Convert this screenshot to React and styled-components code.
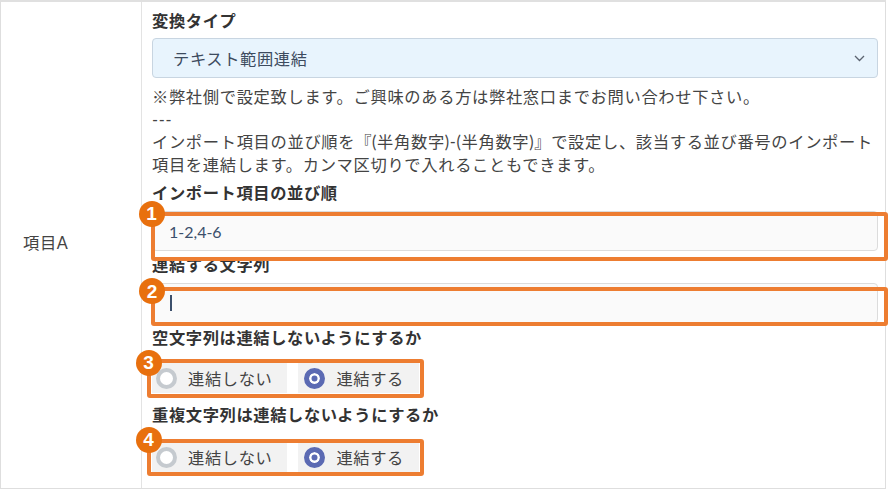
import React from "react";
import styled, { createGlobalStyle } from "styled-components";

const Global = createGlobalStyle`
  html, body { margin: 0; padding: 0; background: #fff; }
  body { overflow: hidden; font-family: Lato, "Noto Sans CJK JP", sans-serif; }
  * { box-sizing: border-box; }
`;

const Table = styled.div`
  width: 886px;
  height: 489px;
  display: grid;
  grid-template-columns: 141px 1fr;
  border: 1px solid #dedede;
  border-top: 2px solid #e0e0e0;
`;

const LabelCell = styled.div`
  display: flex;
  align-items: center;
  padding: 0 0 6px 22px;
  border-right: 1px solid #e3e3e3;
  font-size: 16.3px;
  letter-spacing: 0.6px;
  color: #444;
`;

const ContentCell = styled.div`
  display: flex;
  flex-direction: column;
  align-items: stretch;
  padding: 7px 7px 0 10px;
`;

const FieldLabel = styled.div`
  font-size: 16.3px;
  line-height: 23px;
  font-weight: 700;
  letter-spacing: 0.6px;
  color: #333;
  margin-top: ${(p) => p.$mt || 0}px;
`;

const Select = styled.div`
  margin-top: 6px;
  height: 40px;
  display: flex;
  align-items: center;
  justify-content: space-between;
  padding: 0 12px 0 20px;
  background: #e8f4fd;
  border: 1px solid #c8d5e1;
  border-radius: 4px;
  font-size: 16.3px;
  letter-spacing: 0.6px;
  color: #3d4b5e;
`;

const Note = styled.div`
  margin-top: 8px;
  font-size: 16.3px;
  line-height: 22.5px;
  letter-spacing: 0.65px;
  color: #444;
`;

const Annotated = styled.div`
  position: relative;
  margin-top: ${(p) => p.$mt || 0}px;
  align-self: ${(p) => (p.$inline ? "flex-start" : "stretch")};
`;

const TextInput = styled.div`
  height: 40px;
  display: flex;
  align-items: center;
  padding: 0 16px;
  background: #fafafa;
  border: 1px solid #dcdcdc;
  border-radius: 4px;
  font-size: 16px;
  color: #3b4f6b;
`;

const Caret = styled.span`
  display: inline-block;
  width: 1.5px;
  height: 16px;
  background: #3b4f6b;
  margin-left: 1px;
`;

const Highlight = styled.div`
  position: absolute;
  top: ${(p) => p.$t}px;
  left: ${(p) => p.$l}px;
  right: ${(p) => p.$r}px;
  bottom: ${(p) => p.$b}px;
  border: 4px solid #ed7d31;
  border-radius: 3px;
  pointer-events: none;
`;

const Badge = styled.div`
  position: absolute;
  left: ${(p) => p.$x}px;
  top: ${(p) => p.$y}px;
  width: 26px;
  height: 26px;
  border-radius: 50%;
  background: #e8700e;
  color: #fff;
  display: flex;
  align-items: center;
  justify-content: center;
  font-family: "Liberation Sans", Arial, sans-serif;
  font-weight: 700;
  font-size: 19px;
  line-height: 1;
`;

const RadioGroup = styled.div`
  display: inline-flex;
  gap: 11px;
`;

const RadioPill = styled.div`
  height: 30px;
  display: flex;
  align-items: center;
  gap: 11px;
  padding: 0 15px 0 ${(p) => (p.$checked ? 6 : 4)}px;
  background: #f2f2f2;
  font-size: 16.3px;
  letter-spacing: 0.6px;
  color: #444;
`;

const RadioCircle = styled.span`
  width: 21px;
  height: 21px;
  border-radius: 50%;
  flex: none;
  background: ${(p) => (p.$checked ? "#5b6ab3" : "#fff")};
  border: ${(p) => (p.$checked ? "5px solid #5b6ab3" : "4px solid #c5cacf")};
  box-shadow: ${(p) => (p.$checked ? "inset 0 0 0 2.5px #fff" : "none")};
`;

function Radio({ checked, children }) {
  return (
    <RadioPill $checked={checked}>
      <RadioCircle $checked={checked} />
      <span>{children}</span>
    </RadioPill>
  );
}

function Chevron() {
  return (
    <svg width="11" height="7" viewBox="0 0 11 7">
      <polyline points="1,1 5.5,5.5 10,1" fill="none" stroke="#5b6370" strokeWidth="1.3" />
    </svg>
  );
}

export default function App() {
  return (
    <>
      <Global />
      <Table>
        <LabelCell>項目A</LabelCell>
        <ContentCell>
          <FieldLabel>変換タイプ</FieldLabel>
          <Select>
            <span>テキスト範囲連結</span>
            <Chevron />
          </Select>
          <Note>
            ※弊社側で設定致します。ご興味のある方は弊社窓口までお問い合わせ下さい。
            <br />
            ---
            <br />
            インポート項目の並び順を『(半角数字)-(半角数字)』で設定し、該当する並び番号のインポート
            <br />
            項目を連結します。カンマ区切りで入れることもできます。
          </Note>
          <FieldLabel $mt={5}>インポート項目の並び順</FieldLabel>
          <Annotated $mt={7}>
            <TextInput>1-2,4-6</TextInput>
            <Highlight $t={1} $l={-1} $r={-10} $b={-10} />
            <Badge $x={-13.5} $y={-10.5}>1</Badge>
          </Annotated>
          <FieldLabel $mt={2}>連結する文字列</FieldLabel>
          <Annotated $mt={7}>
            <TextInput>
              <Caret />
            </TextInput>
            <Highlight $t={4} $l={-1} $r={-10} $b={-3} />
            <Badge $x={-13} $y={-5}>2</Badge>
          </Annotated>
          <FieldLabel $mt={3}>空文字列は連結しないようにするか</FieldLabel>
          <Annotated $mt={14} $inline>
            <RadioGroup>
              <Radio>連結しない</Radio>
              <Radio checked>連結する</Radio>
            </RadioGroup>
            <Highlight $t={-4} $l={-5} $r={-5} $b={-5} />
            <Badge $x={-16.5} $y={-13.5}>3</Badge>
          </Annotated>
          <FieldLabel $mt={10}>重複文字列は連結しないようにするか</FieldLabel>
          <Annotated $mt={16} $inline>
            <RadioGroup>
              <Radio>連結しない</Radio>
              <Radio checked>連結する</Radio>
            </RadioGroup>
            <Highlight $t={-3} $l={-5} $r={-5} $b={-4} />
            <Badge $x={-16.5} $y={-15.5}>4</Badge>
          </Annotated>
        </ContentCell>
      </Table>
    </>
  );
}
